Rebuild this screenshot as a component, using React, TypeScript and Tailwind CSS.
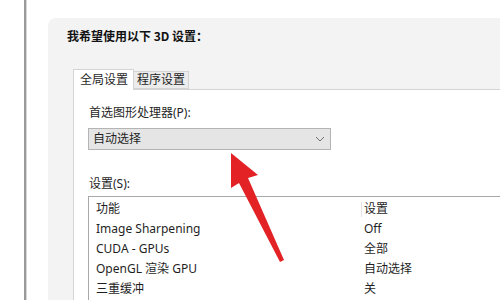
import React from "react";

const rows: [string, string][] = [
  ["Image Sharpening", "Off"],
  ["CUDA - GPUs", "全部"],
  ["OpenGL 渲染 GPU", "自动选择"],
  ["三重缓冲", "关"],
];

export default function App() {
  return (
    <div
      className="relative w-[500px] h-[300px] overflow-hidden bg-white flex text-[12px] text-[#1f1f1f]"
      style={{ fontFamily: '"Noto Sans", "Noto Sans CJK SC", sans-serif' }}
    >
      {/* left window edge */}
      <div className="w-[24px] shrink-0" />
      <div className="w-[2px] shrink-0 bg-[#9a9a9a]" />
      <div className="w-[1px] shrink-0 bg-[#d6d6d6]" />
      <div className="w-[21px] shrink-0" />

      {/* gray panel */}
      <div className="flex-1 mt-[18px] bg-[#f3f3f3] rounded-tl-[8px] flex flex-col overflow-hidden min-h-0">
        <div className="shrink-0 pl-[19px] pt-[10px] h-[50px] font-bold text-[12px] leading-[16px] text-[#111]" style={{ fontFamily: '"Noto Sans CJK SC", sans-serif' }}>
          我希望使用以下 3D 设置：
        </div>

        <div className="pl-[25px] flex-1 flex flex-col min-h-0">
          {/* tabs */}
          <div className="shrink-0 flex items-end h-[21px]">
            <div className="h-[21px] pl-[6px] pr-[5px] bg-white border border-b-0 border-[#d4d4d4] flex items-center leading-none relative z-10 -mb-[1px] pb-[1px]">
              全局设置
            </div>
            <div className="h-[18px] px-[3px] bg-[#ececec] border border-l-0 border-[#d4d4d4] flex items-center leading-none">
              程序设置
            </div>
          </div>

          {/* tab content */}
          <div className="flex-1 min-h-0 bg-white border-t border-l border-[#d4d4d4] pl-[14px] flex flex-col">
            <div className="shrink-0 mt-[15px] h-[16px] leading-[16px] pl-[1px]">首选图形处理器(P):</div>
            <div className="shrink-0 mt-[7px] w-[243px] h-[22px] bg-[#e5e5e5] border border-[#b4b4b4] flex items-center justify-between pl-[4px] pr-[5px]">
              <span className="leading-none">自动选择</span>
              <svg width="10" height="6" viewBox="0 0 10 6">
                <polyline points="1,1 5,5 9,1" fill="none" stroke="#707070" strokeWidth="1" />
              </svg>
            </div>
            <div className="shrink-0 mt-[26px] h-[16px] leading-[16px] pl-[1px]">设置(S):</div>

            {/* list box */}
            <div className="shrink-0 mt-[4px] h-[140px] border-t border-l border-[#a8a8a8] pt-[2px]">
              <div className="flex h-[20px] items-center">
                <div className="w-[272px] pl-[7px]">功能</div>
                <div className="w-[1px] h-[15px] bg-[#e3e3e3]" />
                <div className="pl-[2px]">设置</div>
              </div>
              {rows.map(([a, b]) => (
                <div key={a} className="flex h-[20px] items-center">
                  <div className="w-[273px] pl-[7px]">{a}</div>
                  <div className="pl-[2px]">{b}</div>
                </div>
              ))}
            </div>
          </div>
        </div>
      </div>

      {/* red annotation arrow */}
      <svg className="absolute left-0 top-0 pointer-events-none" width="500" height="300" viewBox="0 0 500 300">
        <polygon
          points="231,153 258,175 248,178 284,260 280,262 239,183 231,188"
          fill="#e32226"
        />
      </svg>
    </div>
  );
}
